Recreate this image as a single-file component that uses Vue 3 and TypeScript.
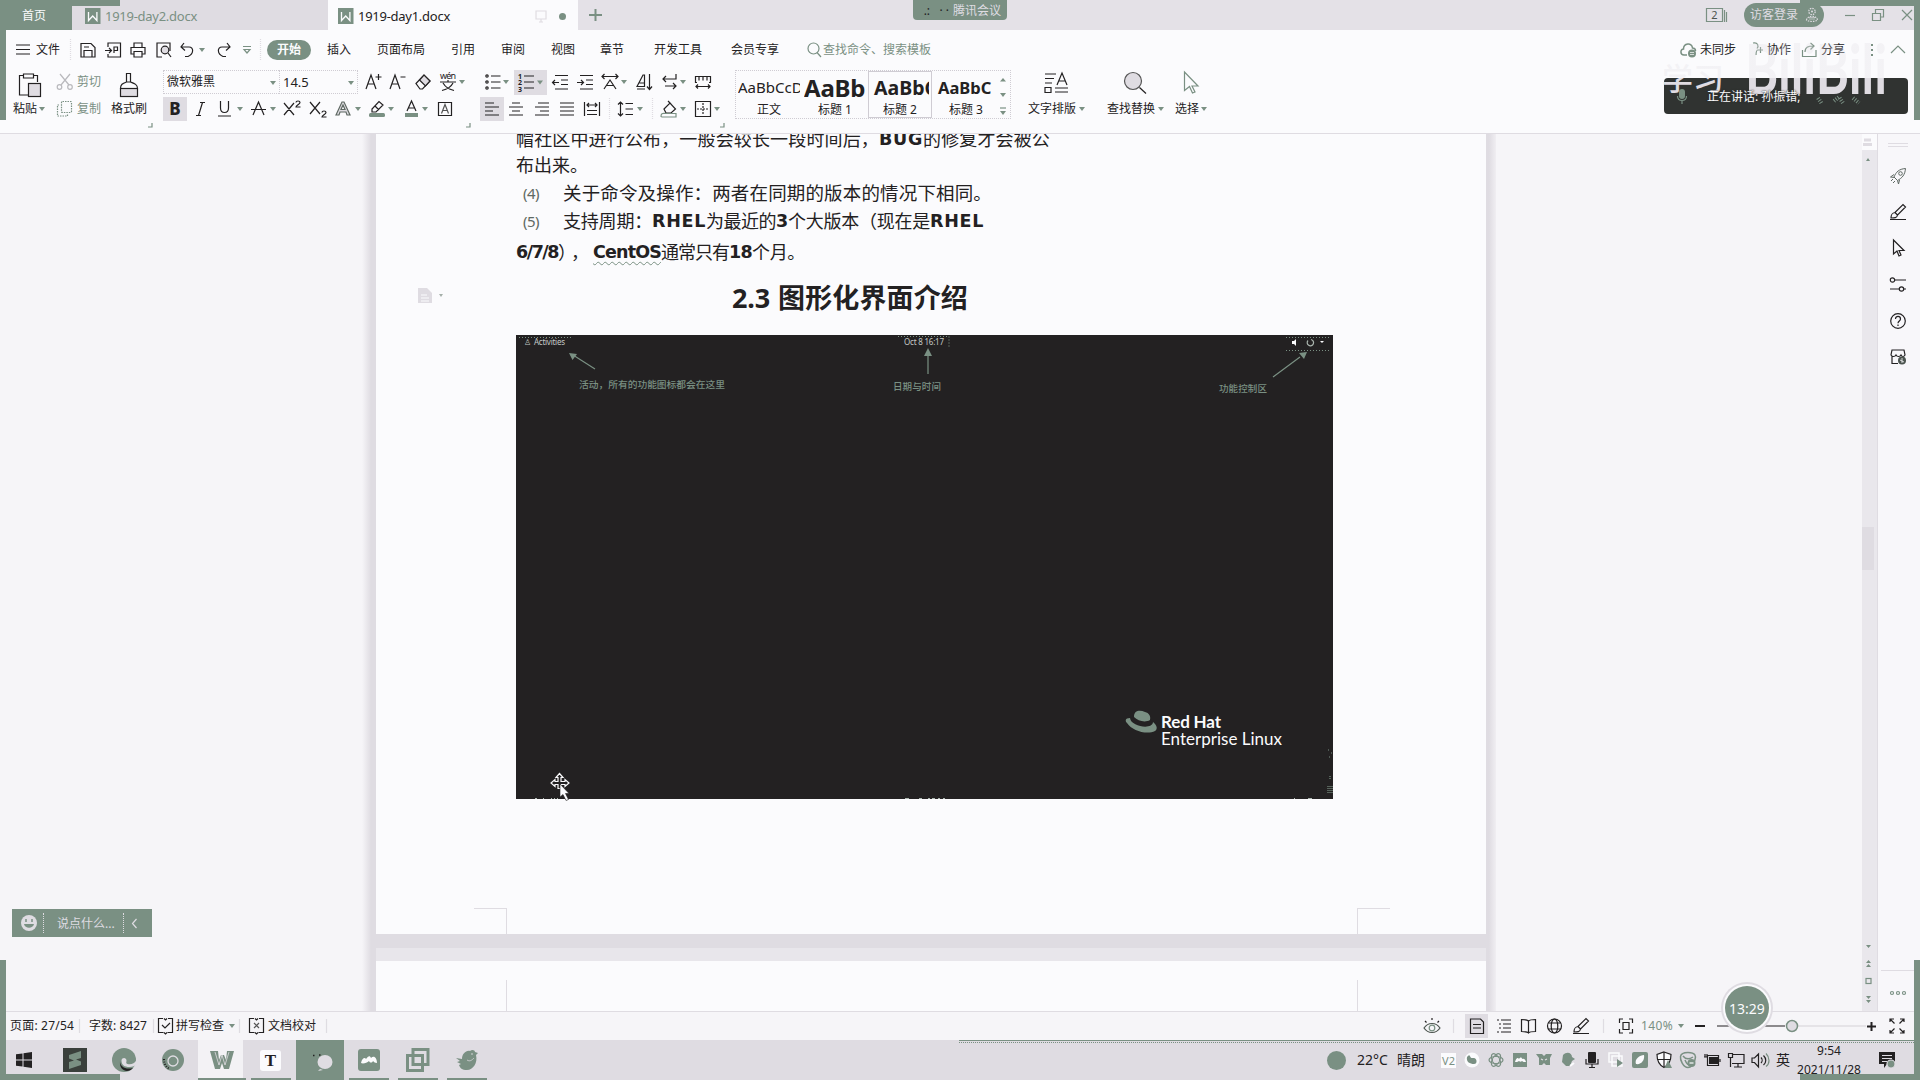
<script setup lang="ts">
import { h, onMounted, ref } from 'vue'

interface Item {
  x: number
  w: number
  t?: string
  i?: string
  h?: number
  c?: string
}

const G = '#7a9083'
const D = '#232122'
const L = '#dfdce2'
const W = '#fbfbfd'

/* Icon markup, drawn in a box of the item's own size (16 x 16 by default). */
const icons: Record<string, string> = {
  caret: `<path d="M0 0h6L3 4z" fill="${G}" stroke="none"/>`,
  caretUp: `<path d="M0 3.500L3 0l3 3.500z" fill="${G}" stroke="none"/>`,
  caretMore: `<path d="M0 0h6" stroke="${G}"/><path d="M0 3h6L3 7z" fill="${G}" stroke="none"/>`,
  sepTall: `<path d="M.5 0v22" stroke="${L}" stroke-dasharray="1 1"/>`,
  sep: `<path d="M.5 0v14" stroke="${L}"/>`,
  wps: `<rect width="15.500" height="16" fill="${G}" stroke="none"/><path d="M3.500 4v8.500l4.200-4.500 4.200 4.500V4" stroke="${W}" stroke-width="1.300"/>`,
  monitor: `<path d="M1 2h10v8H1zM6 10v3M4 13h4" stroke="${L}"/>`,
  dot: `<circle cx="3.500" cy="3.500" r="3.500" fill="${G}" stroke="none"/>`,
  plusGreen: `<path d="M6.500 0v12M0 6h13" stroke="${G}" stroke-width="2"/>`,
  win2: `<path d="M.5 .5h16v13H.5zM18.500 2v12M20.500 4v10" stroke="${G}"/><text x="5.200" y="11" font-size="11" fill="#4c544f" stroke="none">2</text>`,
  avatar: `<circle cx="6" cy="3.500" r="3.200" stroke="${L}" stroke-dasharray="1.500 1"/><circle cx="6" cy="3.500" r="1" fill="${L}" stroke="none"/><path d="M.5 12c1-5 10-5 11 0-3 2-8 2-11 0zM4 9v3M6 9v3M8 9v3" stroke="${L}" stroke-dasharray="1.500 1"/>`,
  min: `<path d="M0 .5h10" stroke="${G}"/>`,
  restore: `<path d="M.5 4.500h8v7h-8zM3.500 4V.5h8v7.500h-3" stroke="${G}"/>`,
  close: `<path d="M0 0l10 10M10 0L0 10" stroke="${G}"/>`,
  menu: `<path d="M0 1h14M0 5.500h14M0 10h14"/>`,
  save: `<path d="M1 1.500h10l4 4V15H1zM4 15V8.500h8V15M4 5h5"/>`,
  export: `<path d="M3 5V1h12.500v14H3v-3M0 8.500h6M4 6l2.500 2.500L4 11M9 11V5h3.500v3.500H9"/>`,
  print: `<path d="M4 5V1h8v4M4 12H1V5.500h14V12h-3M4 9.500h8V15H4z"/>`,
  preview: `<path d="M6 15H1V1h13v8"/><circle cx="9" cy="8" r="3.800" fill="${L}"/><path d="M12 11l3 4"/>`,
  undo: `<path d="M4 1L1 5l4 3.500M1 5h8c5 0 5 7-1 9.500H5"/>`,
  redo: `<path d="M12 1l3 4-4 3.500M15 5H7c-5 0-5 7 1 9.500h3"/>`,
  more: `<path d="M0 .5h8M1 3.500h6L4 7z" stroke="${G}"/>`,
  search: `<circle cx="6.500" cy="6.500" r="5.500" stroke="${G}"/><path d="M10 10.500l4 4.500" stroke="${G}"/>`,
  cloud: `<path d="M7 13H4C0 13 0 7 3.500 7 3.500 1 12 0 12.500 6c3 0 3 2.500 3 3" stroke="${G}" stroke-width="1.500"/><circle cx="12" cy="11.500" r="4" fill="${G}" stroke="none"/><path d="M10 10.500h4M10 12.500h4" stroke="${W}" stroke-width=".7"/>`,
  person: `<path d="M1 1c5-1 6 3 4 5.500M4 13c0-3 1-5 2-5M8.500 5v6M6 8h5" stroke="${G}"/>`,
  share: `<path d="M.5 8v6.500h13.500V8M3 10c0-5 4-6 8-6M8.500 1L12 4 8.500 7.500" stroke="${G}"/>`,
  dots: `<path d="M0 1h2M0 6h2M0 11h2" stroke="${G}" stroke-width="2"/>`,
  up: `<path d="M0 8l7-7 7 7" stroke="${G}"/>`,
  clipboard: `<path d="M4 2.500H.5V22H9M15 2.500h3.500V9M4.500 1h10v4h-10z"/><rect x="9.500" y="10.500" width="12" height="13" fill="${L}"/>`,
  scissors: `<g stroke="#b9b9bd"><path d="M3 0l9 11M13 0L4 11"/><circle cx="2.500" cy="13" r="2.300"/><circle cx="13" cy="13" r="2.300"/></g>`,
  copy: `<g stroke="${G}" stroke-dasharray="1.500 1"><rect x="4.500" y=".5" width="10" height="11" rx="1"/><path d="M2 4H.5v11h10v-2"/></g>`,
  brush: `<rect x=".5" y="15.500" width="17" height="8" fill="${L}"/><path d="M6.500 9V.500h4V9M.5 15.500c0-4 2-5 6-6.500h4c4 1.500 7 2.500 7 6.500"/>`,
  aPlus: `<path d="M0 15L5 1l5 14M2 10h6M12.500 0v6M9.500 3h6"/>`,
  aMinus: `<path d="M0 15L5 1l5 14M2 10h6M10.500 3h5"/>`,
  eraser: `<path d="M1 9.500L9 1l6 6-7.500 8H5z"/><path d="M4.500 6l6 6L15 7 9 1z" fill="${L}"/>`,
  wen: `<path d="M0 8h16M8 6v2M3 9c3 5 6 6 11 7.500M13 9c-2 4-5 6-11 7.500"/><text x="0" y="5" font-size="9" fill="${D}" stroke="none" textLength="16">wén</text>`,
  bullets: `<g stroke="${D}"><circle cx="2" cy="2" r="1.200"/><circle cx="2" cy="8" r="1.200"/><circle cx="2" cy="14" r="1.200"/><path d="M6 2h9.500M6 8h9.500M6 14h9.500"/></g>`,
  numbers: `<rect width="33" height="25" fill="${L}" stroke="none"/><path d="M10 6h10M10 12h10M10 18h10"/><g font-size="7" font-weight="700" fill="${D}" stroke="none"><text x="4" y="8.500">1</text><text x="4" y="15">2</text><text x="4" y="21.500">3</text></g><path d="M23 10.500h6l-3 4z" fill="${G}" stroke="none"/>`,
  outdent: `<path d="M3 1.500h13M9 6h7M9 10.500h7M3 15h13M7 8.500H.5M3 6L.5 8.500 3 11"/>`,
  indent: `<path d="M3 1.500h13M9 6h7M9 10.500h7M3 15h13M0 8.500h6.500M4 6l2.500 2.500L4 11"/>`,
  spacing: `<path d="M0 2.500h16M2.500 0L0 2.500 2.500 5M13.500 0L16 2.500 13.500 5M2 15l6-9 6 9M4.500 11.500h7"/>`,
  sort: `<path d="M0 12.500L6 1h1.500v11.500zM2.500 9h5M12.500 0v15M10 12.500l2.500 3 2.500-3M0 15h8"/>`,
  wrap: `<path d="M14 0v5H1M4 2L1 5l3 3M3 12h11M11 9l3 3-3 3"/>`,
  ruler: `<path d="M2 8.500H.5v-6h15v6H14M4 2.500v4M8 2.500v4M12 2.500v4M1 12.500h14M3 10.500l-2 2 2 2M13 10.500l2 2-2 2"/>`,
  bold: `<rect width="24" height="24" fill="${L}" stroke="none"/><text x="12" y="18" font-size="17" font-weight="800" text-anchor="middle" fill="${D}" stroke="none">B</text>`,
  italic: `<path d="M4 1.500h5M0 14.500h5M6.500 1.500l-4 13"/>`,
  under: `<path d="M2.500 0v7c0 6 8 6 8 0V0M0 15h13"/>`,
  strike: `<path d="M2 14L7.500 1 13 14M0 8.500h15"/>`,
  sup: `<path d="M0 2l10 12M10 2L0 14M12 1.500c0-2 4-2 4 0 0 1.500-4 3-4 4.500h4.500"/>`,
  sub: `<path d="M0 1l10 12M10 1L0 13M12 11.500c0-2 4-2 4 0 0 1.500-4 3-4 4.500h4.500"/>`,
  outlineA: `<path d="M0 14L6 1h2l6 13h-3l-1-3H4l-1 3zM5 8.500h4L7 4z" fill="${L}" stroke="#5f6963"/>`,
  marker: `<rect x="0" y="12" width="16" height="4" rx="1.500" fill="${G}" stroke="none"/><path d="M3 11V8l7-7.500 4 3.500-7 7zM6 5l4 4"/>`,
  colorA: `<path d="M2 10L6.500 0 11 10M3.500 7h6"/><rect x="0" y="12" width="13" height="4" fill="${G}" stroke="none"/>`,
  boxA: `<path d="M.5 1.500h13v13H.5z"/><path d="M3.500 12.500L7 3.500l3.500 9M5 9.500h4" stroke="#555"/>`,
  alignLeft: `<rect width="24" height="24" fill="${L}" stroke="none"/><path d="M5 6h9M5 10h14M5 14h8M5 18h14"/>`,
  alignCenter: `<path d="M3 2h8M0 6h14M3 10h8M0 14h14"/>`,
  alignRight: `<path d="M3 2h11M0 6h14M5 10h9M0 14h14"/>`,
  justify: `<path d="M0 2h14M0 6h14M0 10h14M0 14h14"/>`,
  distribute: `<path d="M.5 1v14M15.500 1v14M3 4h10M5 2L3 4l2 2M11 2l2 2-2 2M3 9.500h10M3 13.500h10"/>`,
  lineHeight: `<path d="M2.500 1v14M0 3.500L2.500 1 5 3.500M0 12.500L2.500 15 5 12.500M7.500 2.500H15M7.500 8H15M7.500 13.500H15"/>`,
  bucket: `<path d="M3 8l6-6 5.500 6L10 12H5zM7 0l3 3"/><path d="M0 15.500c0-4 2-3 5-3h10v3.500H1z" stroke="${G}"/>`,
  borders: `<path d="M.5 .5h15v15H.5z"/><path d="M8 2v12M2 8h12" stroke-dasharray="2 1"/>`,
  layout: `<path d="M0 2h11M0 6.500h9M0 11h7M10 20h13M10 16h13M0 15.500h6v5H0zM12 13l5-12 5 12M14 9h6.500"/>`,
  find: `<circle cx="9" cy="9" r="8.500" fill="${L}" stroke="#555"/><path d="M15.500 15.500l6.500 6"/>`,
  select: `<path d="M.5 0v18.500l5-4 3 6.500 2.500-1-3-6h6z" stroke="${G}"/>`,
  rocket: `<g stroke="#5f6963" stroke-width="1"><path d="M4 9C6 4 9 1 15.500 .5 15 7 12 10 7.500 12.500zM4 6.500L.5 9l4 .5M9.500 12l-1 4-1-3.500M1 13l2-2M3 15l2-2"/><circle cx="10.500" cy="5.500" r="1.800"/></g>`,
  pen: `<path d="M0 15.500h16M1 14c0-4 1-5 4-5.500L13 .5l2.500 2.500-8 8c-.5 3-3 3-6.500 3zM5 8.500l2.500 2.500"/>`,
  arrow: `<path d="M3.500 0v14l3.500-3 2 5 2-1-2-4.500h5z"/>`,
  sliders: `<path d="M5 3h11M0 12h9M13.500 12H16"/><circle cx="2.500" cy="3" r="2.200"/><circle cx="11.500" cy="12" r="2.200"/>`,
  help: `<circle cx="8" cy="8" r="7.300"/><path d="M5.500 6c0-3.500 5-3.500 5 0 0 2-2.500 2-2.500 4.300M8 11.500v1.500"/>`,
  store: `<path d="M2 7v7.500h6M2 1h12l1 5c-1 2-3 2-4 0-1 2-4 2-5 0-1 2-4 2-5 0z"/><circle cx="12" cy="11.500" r="4" fill="#4c544f" stroke="none"/><path d="M12 9v5M10 11l4 2" stroke="${W}" stroke-width=".8"/>`,
  spell: `<path d="M5 .5H.5v14h5M10 .5h4.500v14h-5M4 7l3 3 5-5M6 .500l1.500 1.500L9 .5M6 14.500L7.500 16 9 14.500"/>`,
  proof: `<path d="M5 .5H.5v14h5M10 .5h4.500v14h-5M6 .500l1.500 1.500L9 .5M6 14.500L7.500 16 9 14.500"/><path d="M5 5l5 5M10 5l-5 5" stroke="#555"/>`,
  eye: `<path d="M0 10c4-6 12-6 16 0-4 6-12 6-16 0z" stroke="#4c544f"/><circle cx="8" cy="10" r="2.800" stroke="${G}"/><path d="M1 3l1.500 1.500M8 0v2M15 3l-1.500 1.500"/>`,
  pageView: `<rect width="23" height="24" fill="${L}" stroke="none"/><path d="M5.500 5h10l3 3v11.500h-13zM8 10.500h8M8 14h8"/>`,
  outline: `<path d="M0 2h2M4 2h10M2 6h2M6 6h8M2 10h2M6 10h8M0 14h2M4 14h10"/>`,
  book: `<path d="M7.500 3C6 1.500 3 1.500.5 1.500v12c3 0 6 0 7 1.500 1-1.500 4-1.500 7-1.500v-12c-3 0-5.500 0-7 1.500zV15"/>`,
  globe: `<circle cx="7.500" cy="8" r="7"/><ellipse cx="7.500" cy="8" rx="3.300" ry="7"/><path d="M1.500 5h12M1.500 11h12"/>`,
  fit: `<path d="M4 1H.5v4M10 1h3.500v4M4 15H.5v-4M10 15h3.500v-4M4 4.500h6v7H4z"/>`,
  minus: `<path d="M0 1h10" stroke-width="2"/>`,
  plus: `<path d="M0 4.500h9M4.500 0v9" stroke-width="2"/>`,
  slider: `<path d="M0 7h68"/><path d="M81 7h68" stroke="${L}" stroke-width="1.500"/><circle cx="75" cy="7" r="5.500" fill="${L}" stroke="${G}" stroke-width="1.500"/>`,
  full: `<path d="M0 4V1h4M10 1h4v3M0 12v3h4M10 15h4v-3M0 1l4.500 4.500M14 1L9.500 5.500M0 15l4.500-4.500M14 15l-4.500-4.500"/>`,
  windows: `<path d="M0 2.300l6.500-.8v6H0zM7.500 1.300L16 0v7.500H7.500zM0 8.500h6.500v6L0 13.700zM7.500 8.500H16V16l-8.500-1.200z" fill="${D}" stroke="none"/>`,
  sublime: `<rect width="24" height="24" fill="#3a403c" stroke="none"/><path d="M6 7l12-4v7l-5 1.500 5 2V17L6 21v-7l5-1.500-5-2z" fill="${G}" stroke="none"/>`,
  edge: `<circle cx="12" cy="12" r="12" fill="${G}" stroke="none"/><path d="M9.500 12.500C10 9 14.500 9.500 14.500 12.500c0 2-1 2.500 1 3.500 3 1 7 0 9-4v4c-1 2-4 3-7 3-5 0-8-2-8-6.500z" fill="${L}" stroke="none"/><path d="M8 13c0 6 6 9 13 7-4 5-14 4-13-7z" fill="${D}" stroke="none"/>`,
  chrome: `<circle cx="11" cy="11" r="11" fill="${G}" stroke="none"/><circle cx="11" cy="12" r="5" stroke="${L}" stroke-width="1.300"/><path d="M2 10c0 6 3 9 6 10" stroke="${D}" stroke-dasharray="1 1.500" stroke-width="2"/>`,
  wpsTask: `<rect width="45" height="38" fill="#f3f2f5" stroke="none"/><path d="M0 39h48" stroke="${G}" stroke-width="2"/><path d="M12 11h8l1 9 2-5h3l2 5 1-9h7l-5 18h-5l-2-6-2 6h-5z" fill="${G}" stroke="none"/><path d="M17 12l4 13 3-10 3 10 4-13" stroke="${L}" stroke-width=".8"/>`,
  typora: `<rect x="9" y="10" width="21" height="21" rx="3" fill="${W}" stroke="none"/><path d="M0 39h40" stroke="${G}" stroke-width="2"/><text x="19.500" y="26" font-size="17" font-weight="700" font-family="Liberation Serif, serif" text-anchor="middle" fill="${D}" stroke="none">T</text>`,
  wechat: `<rect width="48" height="40" fill="${G}" stroke="none"/><ellipse cx="29" cy="22" rx="7.500" ry="7" fill="${L}" stroke="none"/><path d="M24 29l-2 2 5-1" fill="${L}" stroke="none"/><path d="M17 15.500h1.500M23 15h1.500" stroke-width="1.500"/>`,
  meeting: `<rect x="9" y="9" width="22" height="22" rx="3" fill="${G}" stroke="none"/><path d="M12 23c1-5 4-6 5-4 2-3 4-4 5-1 3-3 6 0 6 5-2 0-3-1-4-2-1 2-3 2-4 0-2 2-6 3-8 2z" fill="${W}" stroke="none"/><path d="M0 39h40" stroke="${G}" stroke-width="2"/>`,
  vmware: `<path d="M15 9.500h15v15H15zM9.500 15.500h15v15h-15z" stroke="${G}" stroke-width="3"/><path d="M0 39h40" stroke="${G}" stroke-width="2"/>`,
  bird: `<path d="M9 18l6 1c0-5 4-9 8-8 2-2 5-1 5 1l3 1-2 2c2 8-3 15-9 15-5 0-7-2-8-5l2-1-4-2 3-1z" fill="${G}" stroke="none"/><path d="M20 20c3 2 5 0 7-2" stroke="${L}" stroke-width=".7"/><circle cx="25" cy="14" r=".8" fill="${L}" stroke="none"/><path d="M0 39h40" stroke="${G}" stroke-width="2"/>`,
  weather: `<circle cx="9.500" cy="9.500" r="9.500" fill="${G}" stroke="none"/>`,
  v2: `<rect width="15" height="15" fill="${W}" stroke="none"/><text x="1" y="11.500" font-size="11" fill="${G}" stroke="none" textLength="13">V2</text>`,
  swirl: `<circle cx="8" cy="8" r="7.500" fill="${W}" stroke="none"/><path d="M3 5c4-5 2 2 6 1s5 6 1 6-8-2-7-7z" fill="${G}" stroke="none"/>`,
  flower: `<g stroke="${G}"><ellipse cx="8" cy="8" rx="7" ry="3.500"/><ellipse cx="8" cy="8" rx="7" ry="3.500" transform="rotate(60 8 8)"/><ellipse cx="8" cy="8" rx="7" ry="3.500" transform="rotate(120 8 8)"/></g><circle cx="8" cy="8" r="3" fill="${L}" stroke="none"/>`,
  meetSmall: `<rect x="1" y="1" width="14" height="14" fill="${G}" stroke="none"/><path d="M3 10c1-4 3-5 4-3 1-2 3-2 3 0 2-1 3 0 4 3-2 0-3 0-4-1-1 1-2 1-3 0-1 1-3 1-4 1z" fill="${W}" stroke="none"/>`,
  wSmall: `<path d="M0 2h6l2 2 2-2h6l-2 4v7h-4l-2-2-2 2H3V6z" fill="${G}" stroke="none"/><path d="M5 7l2 1M11 7L9 8" stroke="${L}"/>`,
  qq: `<path d="M3 3c4-4 9-2 9 2l3 2-3 2-2 5H6L2 10z" fill="${G}" stroke="none"/><path d="M10 14l4-3" stroke="${W}" stroke-width="2"/>`,
  mic: `<rect x="4" y="0" width="8" height="11" rx="1" fill="${D}" stroke="none"/><path d="M2 7v5h12V7M8 12v4M5 15.500h6"/>`,
  layers: `<path d="M1 1h10v9H1zM4 4h10v10H4z" stroke="${W}" stroke-width="1.500"/><path d="M9 7l6 4-6 4z" fill="${G}" stroke="none"/>`,
  leaf: `<rect width="16" height="16" rx="2" fill="${G}" stroke="none"/><path d="M4 12c-2-5 4-9 8-9 1 5-3 10-8 9z" fill="${W}" stroke="none"/>`,
  shield: `<path d="M8 0l7 2.500c0 7-2 10.500-7 13-5-2.500-7-6-7-13z" fill="${W}"/><path d="M8 0v15M1 7.500h14"/><path d="M12 8l4 8H8.500z" fill="${G}" stroke="none"/>`,
  cat: `<path d="M8 .5c8 0 8 4 7 7s-2 8-7 8-8-8-7.500-11S4 .5 8 .5z" fill="${L}" stroke="${G}" stroke-width="1.500"/><path d="M3 4c3 4 7 3 10 1M5 8c2 5 5 6 8 5" stroke="${G}" stroke-width="1.500"/><circle cx="11.500" cy="11" r="4" fill="${G}" stroke="none"/><path d="M9.500 11h4" stroke="${W}"/>`,
  battery: `<rect x="5" y="5" width="9" height="7" fill="${D}" stroke="none"/><path d="M3.500 3.500h11v10h-11zM16 7v3M0 5h3M1 2v3M3 2v3"/>`,
  network: `<path d="M4 2.500h12v9H4M10 11.500V15M6 15h8M.5 1.500h4v4h-4zM2.500 6v9"/>`,
  volume: `<path d="M0 6h2.500L6.500 2v13l-4-4.500H0zM9 5.500c1.500 1.500 1.500 4 0 5.500M11.500 3.500c3 3 3 7 0 9.500"/><path d="M14 1.500c4 4 4 10 0 13" stroke="${G}"/>`,
  notice: `<path d="M0 0h16v12H8l-3 4v-4H0z" fill="${D}" stroke="none"/><path d="M3 3.500h10M3 6.500h10M3 9.500h5" stroke="${L}"/><circle cx="12" cy="12" r="4" fill="${G}" stroke="${L}"/>`,
  corner: `<path d="M4 0v4H0" stroke="${G}"/>`,
  file: `<path d="M0 0h9l5 5v10H0z" fill="${L}" stroke="none"/><path d="M3 7h6M3 10h8M3 13h8" stroke="${W}"/>`,
  fileCaret: `<path d="M0 0h4L2 3z" fill="#a4afa9" stroke="none"/>`,
}

function Strip(props: { items: Item[]; from?: number }) {
  let edge = props.from ?? 0
  return h(
    'div',
    { class: 'strip' },
    props.items.map((it) => {
      const gap = it.x - edge
      edge = it.x + it.w
      const style = { width: it.w + 'px', marginLeft: gap + 'px' }
      if (it.i) {
        const height = it.h ?? 16
        return h('svg', {
          class: ['cell', it.c],
          style,
          height,
          viewBox: `0 0 ${it.w} ${height}`,
          innerHTML: icons[it.i],
        })
      }
      return h('span', { class: ['cell', it.c], style }, [h('span', { class: 'run' }, it.t)])
    }),
  )
}
Strip.props = ['items', 'from']

const t = (x: number, w: number, text: string, c = ''): Item => ({ x, w, t: text, c })
const i = (x: number, name: string, w = 16, height = 16, c = ''): Item => ({ x, w, i: name, h: height, c })
const caret = (mid: number): Item => i(mid - 3, 'caret', 6, 4)

const menu: Item[] = [
  i(16, 'menu', 14, 11), t(36, 24, '文件'), i(70, 'sepTall', 1, 22),
  i(80, 'save'), i(105, 'export'), i(130, 'print'), i(156, 'preview'), i(180, 'undo'), caret(202),
  i(215, 'redo'), i(243, 'more', 8, 7), i(260, 'sepTall', 1, 22),
  t(267, 44, '开始', 'pill'), t(327, 24, '插入'), t(377, 48, '页面布局'), t(451, 24, '引用'),
  t(501, 24, '审阅'), t(551, 24, '视图'), t(600, 24, '章节'), t(654, 48, '开发工具'), t(731, 48, '会员专享'),
  i(807, 'search', 14), t(823, 108, '查找命令、搜索模板', 'green'),
  i(1680, 'cloud'), t(1700, 36, '未同步'), i(1752, 'person', 12), t(1767, 24, '协作'),
  i(1802, 'share', 14), t(1821, 24, '分享'), i(1871, 'dots', 2, 12), i(1891, 'up', 14, 9),
]

const rowTop: Item[] = [
  i(19, 'clipboard', 22, 19), i(57, 'scissors'), t(77, 24, '剪切', 'green'), i(120, 'brush', 18, 19),
  t(163, 116, '微软雅黑', 'field first'), t(279, 79, '14.5', 'field'),
  i(366, 'aPlus'), i(390, 'aMinus'), i(415, 'eraser'), i(440, 'wen', 16, 17), caret(462),
  i(485, 'bullets'), caret(506), i(514, 'numbers', 33, 25), i(552, 'outdent'), i(577, 'indent'),
  i(602, 'spacing'), caret(624), i(637, 'sort'), i(662, 'wrap'), caret(683), i(695, 'ruler'),
]
const rowBottom: Item[] = [
  t(13, 24, '粘贴'), caret(42), i(57, 'copy'), t(77, 24, '复制', 'green'), t(111, 36, '格式刷'),
  i(163, 'bold', 24, 24), i(196, 'italic', 9), i(218, 'under', 13), caret(240), i(251, 'strike', 15), caret(273),
  i(284, 'sup'), i(310, 'sub'), i(336, 'outlineA', 14), caret(358), i(369, 'marker'), caret(391),
  i(405, 'colorA', 13), caret(425), i(438, 'boxA', 14), i(480, 'alignLeft', 24, 24),
  i(509, 'alignCenter', 14), i(535, 'alignRight', 14), i(560, 'justify', 14), i(584, 'distribute'),
  i(609, 'sepTall', 1, 22), i(618, 'lineHeight'), caret(640), i(652, 'sepTall', 1, 22),
  i(661, 'bucket'), caret(683), i(695, 'borders'), caret(717),
]
const bigIcons: Item[] = [i(1045, 'layout', 23, 20), i(1124, 'find', 22, 20), i(1184, 'select', 16, 20)]
const bigLabels: Item[] = [
  t(1028, 48, '文字排版'), caret(1082), t(1107, 48, '查找替换'), caret(1161), t(1175, 24, '选择'), caret(1204),
]
const corners: Item[] = [i(148, 'corner', 4, 4), i(466, 'corner', 4, 4), i(720, 'corner', 4, 4)]

const styles = [
  { sample: 'AaBbCcD', label: '正文', c: 's0' },
  { sample: 'AaBb', label: '标题 1', c: 's1' },
  { sample: 'AaBbC', label: '标题 2', c: 's2' },
  { sample: 'AaBbC', label: '标题 3', c: 's3' },
]

const lines: Item[][] = [
  [t(516, 363, '帽社区中进行公布，一般会较长一段时间后，'), t(879, 44, 'BUG', 'heavy'), t(923, 127, '的修复才会被公')],
  [t(516, 72, '布出来。')],
  [t(523, 16, '(4)', 'mark'), t(563, 429, '关于命令及操作：两者在同期的版本的情况下相同。')],
  [
    t(523, 16, '(5)', 'mark'), t(563, 89, '支持周期：'), t(652, 54, 'RHEL', 'heavy'), t(706, 70, '为最近的'),
    t(776, 12, '3', 'heavy'), t(788, 71, '个大版本'), t(859, 71, '（现在是'), t(930, 54, 'RHEL', 'heavy'),
  ],
  [
    t(516, 42, '6/7/8', 'heavy'), t(558, 35, '），'), t(593, 68, 'CentOS', 'heavy wavy'), t(661, 68, '通常只有'),
    t(729, 23, '18', 'heavy'), t(752, 53, '个月。'),
  ],
]
const heading: Item[] = [i(418, 'file', 14, 21), i(439, 'fileCaret', 4, 9), t(732, 38, '2.3', 'h'), t(778, 190, '图形化界面介绍', 'h')]

const statusItems: Item[] = [
  t(10, 64, '页面: 27/54'), i(79, 'sep', 1, 14), t(89, 58, '字数: 8427'), i(153, 'sep', 1, 14),
  i(158, 'spell'), t(176, 48, '拼写检查'), caret(232), i(239, 'sep', 1, 14), i(249, 'proof'), t(268, 48, '文档校对'),
  i(326, 'sep', 1, 14), i(1424, 'eye'), i(1453, 'sep', 1, 14), i(1465, 'pageView', 23, 24),
  i(1497, 'outline', 14), i(1521, 'book', 15), i(1547, 'globe', 15), i(1573, 'pen'), i(1603, 'sep', 1, 14),
  i(1619, 'fit', 14), t(1641, 32, '140%', 'green'), caret(1681), i(1695, 'minus', 10, 2), i(1717, 'slider', 149, 14),
  i(1867, 'plus', 9, 9), i(1890, 'full', 14),
]
const tray = ['swirl', 'flower', 'meetSmall', 'wSmall', 'qq', 'mic', 'layers', 'leaf', 'shield', 'cat', 'battery', 'network', 'volume']
const taskItems: Item[] = [
  i(16, 'windows'), i(63, 'sublime', 24, 24), i(112, 'edge', 24, 24), i(162, 'chrome', 22, 22),
  i(198, 'wpsTask', 48, 40), i(251, 'typora', 40, 40), i(296, 'wechat', 48, 40), i(349, 'meeting', 40, 40),
  i(398, 'vmware', 40, 40), i(447, 'bird', 40, 40),
  i(1327, 'weather', 19, 19), t(1357, 31, '22°C', 'md'), t(1397, 28, '晴朗', 'md'), i(1441, 'v2', 15, 15),
  ...tray.map((name, n) => i(1464 + n * 24, name)),
  t(1776, 14, '英', 'md'),
]
const sideIcons = ['rocket', 'pen', 'arrow', 'sliders', 'help', 'store']

const root = ref<HTMLElement>()

/* Spread each text run over the width of its own cell. */
onMounted(() => {
  root.value?.querySelectorAll<HTMLElement>('.cell > .run').forEach((el) => {
    const cell = el.parentElement as HTMLElement
    if (cell.matches('.pill, .field')) return
    const count = (el.textContent ?? '').length
    el.style.letterSpacing = (cell.clientWidth - el.getBoundingClientRect().width) / count + 'px'
  })
})
</script>

<template>
  <div ref="root" class="app">
    <header class="titlebar">
      <div class="tab home">首页</div>
      <div class="tab idle"><Strip :from="72" :items="[i(85, 'wps'), t(105, 92, '1919-day2.docx', 'tabname green')]" /></div>
      <div class="tab active">
        <Strip :from="328" :items="[i(338, 'wps'), t(358, 92, '1919-day1.docx', 'tabname'), i(535, 'monitor', 12, 14), i(559, 'dot', 7, 7)]" />
      </div>
      <Strip :from="578" :items="[i(589, 'plusGreen', 13, 12)]" />
      <div class="meeting"><span class="meeting-dots">.: &nbsp; · ·</span>腾讯会议</div>
      <div class="window-tools">
        <Strip :from="1700" :items="[i(1706, 'win2', 21, 15)]" />
        <div class="login">访客登录<svg width="12" height="14" viewBox="0 0 12 14" v-html="icons.avatar" /></div>
        <Strip :from="1824" :items="[i(1845, 'min', 10, 1), i(1872, 'restore', 12, 12), i(1902, 'close', 10, 10)]" />
      </div>
    </header>

    <Strip class="menu" :items="menu" />

    <section class="ribbon">
      <div class="tools">
        <Strip class="row" :items="rowTop" />
        <Strip class="row second" :items="rowBottom" />
        <Strip class="corners" :items="corners" />
      </div>
      <div class="gallery">
        <div v-for="s in styles" :key="s.label" class="style" :class="s.c">
          <div class="sample">{{ s.sample }}</div>
          <div class="label">{{ s.label }}</div>
        </div>
        <div class="gallery-scroll">
          <svg width="6" height="4" v-html="icons.caretUp" />
          <svg width="6" height="4" v-html="icons.caret" />
          <svg width="6" height="7" v-html="icons.caretMore" />
        </div>
      </div>
      <div class="tools">
        <Strip class="row" :from="1011" :items="bigIcons" />
        <Strip class="row second" :from="1011" :items="bigLabels" />
      </div>
    </section>

    <main class="workspace">
      <div class="desk">
        <div class="chat">
          <svg width="16" height="16" viewBox="0 0 16 16">
            <circle cx="8" cy="8" r="8" fill="#dfdce2" stroke="none" />
            <path d="M5 4v3M11 4v3" stroke="#7a9083" stroke-width="1.500" />
            <path d="M3 9h10c-1 5-9 5-10 0z" fill="#7a9083" stroke="none" />
          </svg>
          <span class="chat-text">说点什么...</span>
          <svg width="5" height="9" viewBox="0 0 5 9"><path d="M4.500 0L.5 4.500l4 4.500" stroke="#dfdce2" /></svg>
        </div>
      </div>
      <div class="paper">
        <article class="page">
          <Strip v-for="(line, n) in lines" :key="n" class="line" :class="'l' + n" :from="376" :items="line" />
          <Strip class="heading" :from="376" :items="heading" />
          <svg class="figure" width="817" height="464" viewBox="516 335 817 464">
            <rect x="516" y="335" width="817" height="464" fill="#232122" stroke="none" />
            <g fill="none" stroke="#7a9083">
              <path d="M519 337.500h53M898 336.500h51v12M1286 337.500h44M1286 350.500h44" stroke-dasharray="1 2" />
              <path d="M595 369l-22-14M928 374v-22M1273 377l27-20" />
              <path d="M1311 339.500a3.200 3.200 0 1 1-3 1" stroke="#aab5ae" />
            </g>
            <g fill="#7a9083" stroke="none">
              <path d="M569 353l8 1-4.500 6zM928 348l4 8h-8zM1307 352l-8 1 5 6z" />
              <path d="M1292 341h2l2-2v7l-2-2h-2zM1320 341h4l-2 2z" fill="#fbfbfd" />
              <path d="M1134 717c0-7 6-7 11-5 4 1 6 4 5 8-5 3-12 1-16-3z" />
              <path d="M1130 718c-5 0-5 3-3 5 5 8 20 12 28 8 3-2 2-6-2-9 0 8-22 5-23-4z" />
            </g>
            <g class="figure-small">
              <text x="524" y="345">♙</text>
              <text x="534" y="345" textLength="31">Activities</text>
              <text x="904" y="345" textLength="40">Oct 8 16:17</text>
            </g>
            <g class="figure-note">
              <text x="579" y="387.500" textLength="146" lengthAdjust="spacingAndGlyphs">活动，所有的功能图标都会在这里</text>
              <text x="893" y="389.500" textLength="48">日期与时间</text>
              <text x="1219" y="391.500" textLength="48">功能控制区</text>
            </g>
            <text class="brand" x="1161" y="728" font-weight="700" textLength="60">Red Hat</text>
            <text class="brand" x="1161" y="745" textLength="121">Enterprise Linux</text>
            <path d="M1328 750h1m2 3h1m-3 4h1M1330 776v4M1328 786v8M1330 786v8M1332 786v8" stroke="#7a9083" stroke-dasharray="1 1" fill="none" />
            <path d="M535 798.500h2m6 0h1m7 0h1m2 0h1m2 0h1M905 798.500h4m10 0h3m6 0h2m2 0h3m3 0h2m3 0h2M1294 798.500h1m13 0h4" stroke="#aab5ae" />
            <path
              d="M559.500 773.500l3.500 4h-2v4h4v-2l4 3.500-4 3.500v-2h-4v4h-3v-4h-3v2l-4-3.500 4-3.500v2h3v-4h-2z"
              fill="#232122" stroke="#fbfbfd"
            />
            <path d="M560 784v13l3-2.500 3 6 2.500-1-3-6h3.500z" fill="#fbfbfd" stroke="#232122" stroke-width=".6" />
          </svg>
          <div class="marks"><i class="mark-left"></i><i class="mark-right"></i></div>
        </article>
        <div class="page-gap"></div>
        <div class="page next"><i></i><i></i></div>
      </div>
      <div class="desk right"></div>
      <div class="scroll">
        <svg width="15" height="877" viewBox="1862 134 15 877">
          <path d="M1862 134h15v16h-15z" fill="#fbfbfd" stroke="none" />
          <path d="M1864 140h7M1863 144.500h9" stroke="#dfdce2" stroke-width="3" />
          <rect x="1862" y="527" width="12" height="43" fill="#dfdce2" stroke="none" />
          <g fill="#7a9083" stroke="none">
            <path d="M1866 161l2-3 2 3zM1866 945h5l-2.500 3zM1866 963l2.500-3 2.500 3zM1866 967l2.500-3 2.500 3zM1866 996h5l-2.500 3zM1866 1000h5l-2.500 3z" />
          </g>
          <rect x="1866" y="978.500" width="5" height="5" stroke="#7a9083" />
        </svg>
      </div>
      <aside class="side">
        <div class="grip"></div>
        <svg v-for="name in sideIcons" :key="name" class="side-icon" width="16" height="16" viewBox="0 0 16 16" v-html="icons[name]" />
        <div class="side-more">
          <svg width="16" height="4" viewBox="0 0 16 4">
            <g stroke="#7a9083"><circle cx="2" cy="2" r="1.500" /><circle cx="8" cy="2" r="1.500" /><circle cx="14" cy="2" r="1.500" /></g>
          </svg>
        </div>
      </aside>
    </main>

    <Strip class="status" :items="statusItems" />

    <footer class="taskbar">
      <Strip :items="taskItems" />
      <div class="clock"><span>9:54</span><span>2021/11/28</span></div>
      <svg class="notice" width="16" height="16" viewBox="0 0 16 16" v-html="icons.notice" />
    </footer>

    <div class="task-edge"></div>
    <div class="speaking">
      <svg width="10" height="15" viewBox="0 0 10 15">
        <rect x="2" y="0" width="6" height="10" rx="3" fill="#7a9083" stroke="none" />
        <path d="M.5 7c0 6 9 6 9 0M5 12v3" stroke="#7a9083" />
      </svg>
    </div>
    <svg class="watermark" width="246" height="68" viewBox="1662 36 246 68">
      <defs>
        <linearGradient id="wm" gradientUnits="userSpaceOnUse" x1="0" y1="36" x2="0" y2="104">
          <stop offset=".617" stop-color="#dfdce2" stop-opacity=".28" />
          <stop offset=".617" stop-color="#dfdce2" />
        </linearGradient>
      </defs>
      <g fill="url(#wm)" stroke="none">
        <text x="1662" y="90" font-size="31" font-weight="500" textLength="62">学习</text>
        <text class="wm-brand" x="1745" y="94" textLength="142" lengthAdjust="spacingAndGlyphs">BiliBili</text>
      </g>
      <path d="M1818 98l4 6M1834 101l5-4 4 6M1853 98l6 5" stroke="#7a9083" stroke-dasharray="1 1.500" stroke-width="4" />
    </svg>
    <div class="speaker">正在讲话: 孙振错;</div>
    <div class="timer">13:29</div>
    <div class="bracket tl"></div>
    <div class="bracket tr"></div>
    <div class="bracket bl"></div>
    <div class="bracket br"></div>
  </div>
</template>

<style>
body {
  margin: 0;
}
.strip {
  display: flex;
  align-items: center;
}
.strip .cell {
  flex: none;
  white-space: nowrap;
}
.strip span.cell {
  display: block;
}
.strip .run {
  display: inline-block;
}
svg {
  fill: none;
  stroke: #232122;
  stroke-width: 1.2;
  overflow: visible;
  flex: none;
}
.cell.green {
  color: #7a9083;
}
.cell.tabname {
  font-size: 13px;
}
.cell.md {
  font-size: 14px;
}
.cell.pill {
  height: 20px;
  line-height: 20px;
  border-radius: 10px;
  background: #7a9083;
  color: #fbfbfd;
  font-weight: 700;
  text-align: center;
}
.cell.field {
  box-sizing: border-box;
  height: 24px;
  line-height: 22px;
  padding-left: 3px;
  border: 1px dotted #cfccd3;
  position: relative;
  font-size: 13px;
}
.cell.field.first {
  border-right: 0;
  font-size: 12px;
}
.cell.field::after {
  content: '';
  position: absolute;
  right: 3px;
  top: 10px;
  border: 3px solid transparent;
  border-top: 4px solid #7a9083;
  border-bottom: 0;
}
.cell.heavy {
  font: 700 17.5px 'DejaVu Sans', sans-serif;
}
.cell.wavy .run {
  text-decoration: underline wavy #7a9083 1px;
  text-underline-offset: 3px;
}
.cell.mark {
  font-size: 15px;
  color: #5f6963;
}
.cell.h {
  font-weight: 700;
  font-size: 27px;
}
</style>

<style scoped>
.app {
  width: 1920px;
  height: 1080px;
  position: relative;
  overflow: hidden;
  display: flex;
  flex-direction: column;
  background: #fbfbfd;
  color: #232122;
  font: 12px/18px 'Noto Sans', 'Noto Sans CJK SC', sans-serif;
}
.titlebar {
  height: 30px;
  display: flex;
  background: #e4e1e7;
}
.tab {
  height: 30px;
  display: flex;
}
.tab.home {
  width: 72px;
  padding-left: 22px;
  box-sizing: border-box;
  background: #7a9083;
  color: #fbfbfd;
  line-height: 32px;
}
.tab.idle {
  width: 256px;
  background: #dfdce2;
}
.tab.active {
  width: 250px;
  background: #fbfbfd;
}
.tab .strip {
  padding-top: 2px;
}
.meeting {
  width: 94px;
  height: 20px;
  margin-left: 311px;
  box-sizing: border-box;
  padding-right: 6px;
  border-radius: 0 0 4px 4px;
  background: #7a9083;
  color: #dfdce2;
  line-height: 21px;
  text-align: right;
}
.meeting-dots {
  color: #232122;
  margin-right: 4px;
}
.window-tools {
  display: flex;
  margin-left: 693px;
}
.login {
  width: 80px;
  height: 24px;
  margin-top: 3px;
  margin-left: 17px;
  box-sizing: border-box;
  padding: 0 6px;
  border-radius: 12px;
  background: #7a9083;
  color: #dfdce2;
  display: flex;
  align-items: center;
  justify-content: space-between;
}
.menu {
  height: 37px;
  padding-top: 1px;
}
.ribbon {
  height: 65px;
  display: flex;
  border-bottom: 1px solid #dfdce2;
}
.tools {
  width: 735px;
  padding-top: 2px;
}
.row {
  height: 24px;
}
.row.second {
  margin-top: 2px;
  height: 25px;
}
.corners {
  height: 8px;
}
.gallery {
  width: 276px;
  height: 49px;
  margin-top: 2px;
  box-sizing: border-box;
  border: 1px dotted #cfccd3;
  display: flex;
}
.style {
  width: 66px;
  box-sizing: border-box;
  padding: 1px 2px;
  text-align: center;
}
.sample {
  height: 29px;
  line-height: 31px;
  overflow: hidden;
  white-space: nowrap;
  text-align: left;
  font-weight: 700;
}
.s0 .sample {
  font-weight: 400;
  font-size: 15px;
}
.s1 .sample {
  font-size: 24px;
  letter-spacing: -0.2px;
}
.s2 .sample {
  font-size: 19.500px;
  padding-left: 3px;
}
.s3 .sample {
  font-size: 16.500px;
  padding-left: 3px;
}
.s2 {
  width: 64px;
  border: 1px solid #cfccd3;
  padding: 0 2px;
}
.s3 {
  margin-left: 1px;
}
.gallery-scroll {
  display: flex;
  flex-direction: column;
  justify-content: space-between;
  padding: 7px 0 3px 1px;
}
.workspace {
  height: 877px;
  display: flex;
  overflow: hidden;
}
.desk {
  width: 362px;
  background: #f6f5f8;
}
.desk.right {
  width: 366px;
}
.chat {
  width: 140px;
  height: 28px;
  margin: 775px 0 0 12px;
  box-sizing: border-box;
  padding: 0 14px 0 9px;
  background: #7a9083;
  color: #dfdce2;
  display: flex;
  align-items: center;
}
.chat-text {
  height: 20px;
  line-height: 21px;
  width: 66px;
  margin: 0 8px 0 6px;
  padding-left: 13px;
  border: 1px dotted #dfdce2;
  border-width: 0 1px;
}
.paper {
  width: 1110px;
  padding: 0 10px 0 14px;
  background: linear-gradient(90deg, #f6f5f8, #dfdce2 9px, #dfdce2 1127px, #f0eef2);
  display: flex;
  flex-direction: column;
}
.page {
  height: 800px;
  background: #fbfbfd;
  display: flex;
  flex-direction: column;
}
.line {
  height: 24px;
  flex: none;
  font-size: 18px;
  line-height: 24px;
}
.l0 {
  margin-top: -7px;
}
.l1 {
  margin-top: 2px;
}
.l2 {
  margin-top: 4px;
  font-size: 18.500px;
}
.l3 {
  margin-top: 4px;
}
.l4 {
  margin-top: 7px;
}
.heading {
  height: 32px;
  margin: 18px 0 21px;
  line-height: 32px;
  flex: none;
}
.figure {
  margin-left: 140px;
}
.figure-small {
  font-size: 8px;
  fill: #c3c9c6;
  stroke: none;
}
.figure-note {
  font-size: 9.500px;
  font-weight: 500;
  fill: #7a9083;
  stroke: none;
}
.brand {
  font-family: Lato, sans-serif;
  font-size: 17px;
  fill: #fbfbfd;
  stroke: none;
}
.marks {
  height: 26px;
  margin-top: 109px;
  display: flex;
  justify-content: space-between;
  padding: 0 96px 0 98px;
}
.marks i {
  width: 32px;
  border-top: 1px solid #dfdce2;
}
.mark-left {
  border-right: 1px solid #dfdce2;
}
.mark-right {
  border-left: 1px solid #dfdce2;
}
.page-gap {
  height: 27px;
  background: linear-gradient(#dfdce2 14px, #e8e6eb 14px);
}
.page.next {
  height: 50px;
  box-sizing: border-box;
  padding: 19px 128px 0 130px;
  flex-direction: row;
  justify-content: space-between;
}
.page.next i {
  width: 1px;
  background: #dfdce2;
}
.scroll {
  width: 15px;
  background: #e9e7ec;
  border-right: 1px solid #dfdce2;
}
.side {
  width: 42px;
  box-sizing: border-box;
  padding-right: 3px;
  background: #f8f7fa;
  display: flex;
  flex-direction: column;
  align-items: center;
}
.grip {
  width: 20px;
  height: 2px;
  margin: 9px 0 21px;
  border: 1px solid #dfdce2;
  border-width: 1px 0;
}
.side-icon {
  margin-bottom: 20.200px;
}
.side-more {
  width: 34px;
  height: 41px;
  margin-top: auto;
  border-top: 1px solid #dfdce2;
  display: flex;
  justify-content: center;
  padding-top: 20px;
  box-sizing: border-box;
}
.status {
  height: 28px;
  border-top: 1px solid #dfdce2;
  background: #f6f5f8;
}
.taskbar {
  height: 40px;
  display: flex;
  align-items: center;
  background: #dfdce2;
}
.clock {
  width: 66px;
  margin-left: 6px;
  display: flex;
  flex-direction: column;
  align-items: center;
  line-height: 19px;
}
.notice {
  margin-left: 17px;
}
.task-edge {
  position: absolute;
  left: 959px;
  top: 1040px;
  width: 955px;
  height: 1px;
  border-top: 1px solid #7a9083;
  border-bottom: 1px dotted #7a9083;
}
.speaking {
  position: absolute;
  left: 1664px;
  top: 78px;
  width: 244px;
  height: 36px;
  border-radius: 4px;
  background: #303331;
  display: flex;
  align-items: center;
  padding: 0 13px;
  box-sizing: border-box;
}
.watermark {
  position: absolute;
  left: 1662px;
  top: 36px;
}
.wm-brand {
  font: 700 68px Lato, sans-serif;
}
.speaker {
  position: absolute;
  left: 1707px;
  top: 88px;
  color: #fbfbfd;
  text-shadow: 0 0 1px #303331, 0 0 2px #303331;
}
.timer {
  position: absolute;
  left: 1725px;
  top: 986px;
  width: 44px;
  height: 44px;
  border-radius: 50%;
  background: #7a9083;
  box-shadow: 0 0 0 2px #fbfbfd, 0 0 0 4px #dfdce2;
  color: #fbfbfd;
  font-size: 14px;
  line-height: 46px;
  text-align: center;
}
.bracket {
  position: absolute;
  width: 120px;
  height: 120px;
  box-sizing: border-box;
  border: 0 solid #7a9083;
}
.tl {
  left: 0;
  top: 0;
  border-width: 6px 0 0 6px;
}
.tr {
  right: 0;
  top: 0;
  border-width: 6px 6px 0 0;
}
.bl {
  left: 0;
  bottom: 0;
  border-width: 0 0 6px 6px;
}
.br {
  right: 0;
  bottom: 0;
  border-width: 0 6px 6px 0;
}
</style>
